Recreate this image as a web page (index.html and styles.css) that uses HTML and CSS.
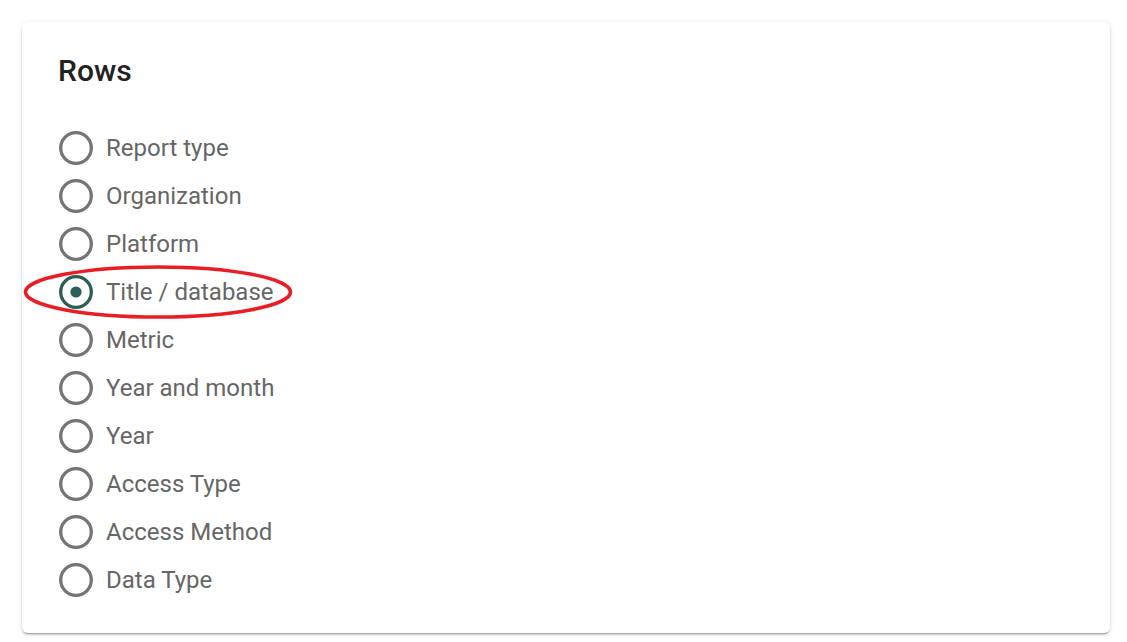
FILE: index.html
```html
<!DOCTYPE html>
<html lang="en">
<head>
<meta charset="utf-8">
<title>Rows</title>
<link rel="stylesheet" href="styles.css">
</head>
<body>
<div class="page">
  <section class="card">
    <h2 class="card-title">Rows</h2>
    <div class="radio-group" role="radiogroup">
      <label class="radio"><svg class="radio-icon" viewBox="0 0 34 34"><circle cx="17" cy="17" r="15.3" class="ring"/></svg><span class="radio-label">Report type</span></label>
      <label class="radio"><svg class="radio-icon" viewBox="0 0 34 34"><circle cx="17" cy="17" r="15.3" class="ring"/></svg><span class="radio-label">Organization</span></label>
      <label class="radio"><svg class="radio-icon" viewBox="0 0 34 34"><circle cx="17" cy="17" r="15.3" class="ring"/></svg><span class="radio-label">Platform</span></label>
      <label class="radio is-active"><svg class="radio-icon" viewBox="0 0 34 34"><circle cx="17" cy="17" r="15.3" class="ring"/><circle cx="17" cy="17" r="5.6" class="dot"/></svg><span class="radio-label">Title / database</span>
        <svg class="highlight" viewBox="0 0 272 56"><ellipse cx="136" cy="28" rx="132.5" ry="25" /></svg>
      </label>
      <label class="radio"><svg class="radio-icon" viewBox="0 0 34 34"><circle cx="17" cy="17" r="15.3" class="ring"/></svg><span class="radio-label">Metric</span></label>
      <label class="radio"><svg class="radio-icon" viewBox="0 0 34 34"><circle cx="17" cy="17" r="15.3" class="ring"/></svg><span class="radio-label">Year and month</span></label>
      <label class="radio"><svg class="radio-icon" viewBox="0 0 34 34"><circle cx="17" cy="17" r="15.3" class="ring"/></svg><span class="radio-label">Year</span></label>
      <label class="radio"><svg class="radio-icon" viewBox="0 0 34 34"><circle cx="17" cy="17" r="15.3" class="ring"/></svg><span class="radio-label">Access Type</span></label>
      <label class="radio"><svg class="radio-icon" viewBox="0 0 34 34"><circle cx="17" cy="17" r="15.3" class="ring"/></svg><span class="radio-label">Access Method</span></label>
      <label class="radio"><svg class="radio-icon" viewBox="0 0 34 34"><circle cx="17" cy="17" r="15.3" class="ring"/></svg><span class="radio-label">Data Type</span></label>
    </div>
  </section>
</div>
</body>
</html>
```

FILE: styles.css
```css
html, body {
  margin: 0;
  padding: 0;
  background: #ffffff;
}

body {
  font-family: Roboto, "Liberation Sans", Arial, sans-serif;
}

.page {
  padding: 22px 17px 9px 22px;
}

.card {
  background: #ffffff;
  border-radius: 6px;
  height: 611px;
  box-sizing: border-box;
  padding: 29px 37px 29px 37px;
  box-shadow: 0 3px 1px -2px rgba(0, 0, 0, 0.2),
              0 2px 2px 0 rgba(0, 0, 0, 0.14),
              0 1px 5px 0 rgba(0, 0, 0, 0.12);
}

.card-title {
  margin: 0 0 0 -1px;
  font-size: 30px;
  line-height: 40px;
  font-weight: 500;
  color: #222222;
}

.radio-group {
  margin-top: 33px;
  display: flex;
  flex-direction: column;
  align-items: flex-start;
}

.radio {
  position: relative;
  display: flex;
  align-items: center;
  height: 48px;
  cursor: pointer;
}

.radio-icon {
  width: 34px;
  height: 34px;
  margin-right: 13px;
  flex: none;
}

.ring {
  fill: none;
  stroke: #757575;
  stroke-width: 3.3;
}

.is-active .ring {
  stroke: #2c5d57;
}

.dot {
  fill: #2c5d57;
}

.radio-label {
  font-size: 24px;
  line-height: 48px;
  color: #666666;
}

.highlight {
  position: absolute;
  left: -37px;
  top: -4px;
  width: 272px;
  height: 56px;
  overflow: visible;
  pointer-events: none;
}

.highlight ellipse {
  fill: none;
  stroke: #e81d25;
  stroke-width: 3.6;
}
```
